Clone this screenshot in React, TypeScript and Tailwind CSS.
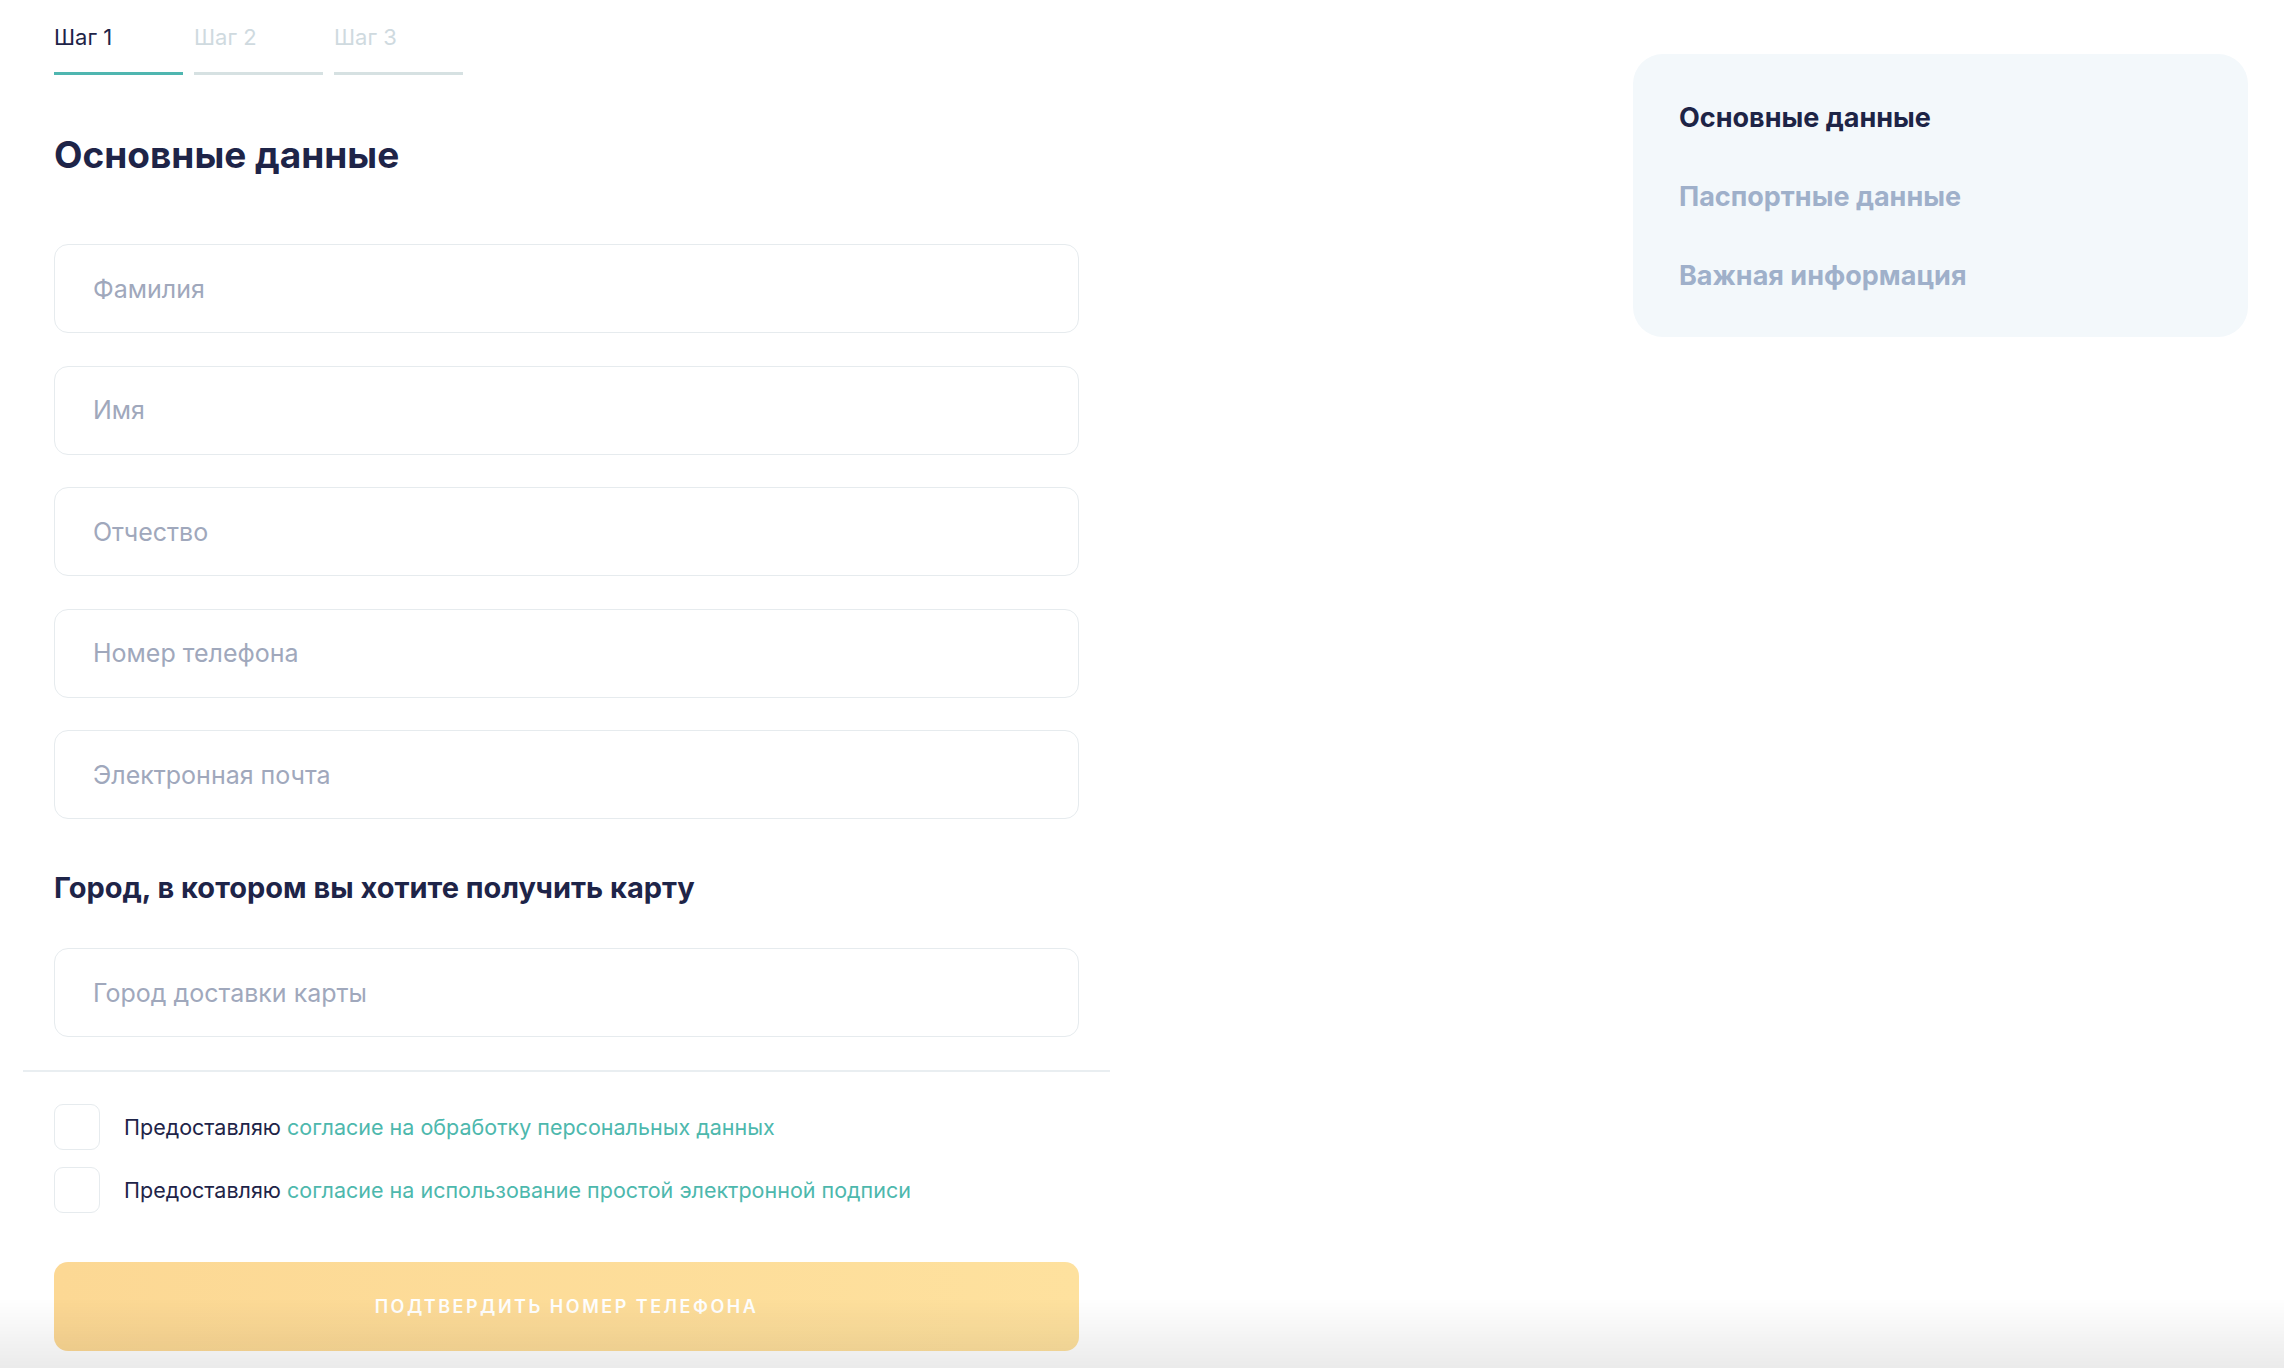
import React from 'react';

const font = { fontFamily: '"Inter", "Noto Sans", sans-serif' };

const fields = ['Фамилия', 'Имя', 'Отчество', 'Номер телефона', 'Электронная почта'];

const Field: React.FC<{ placeholder: string }> = ({ placeholder }) => (
  <input
    placeholder={placeholder}
    className="h-[89px] w-full rounded-[14px] border border-[#e6ebee] bg-white pl-[38px] text-[25px] text-[#1e2448] placeholder:text-[#a0a8bc] outline-none"
  />
);

const Consent: React.FC<{ link: string }> = ({ link }) => (
  <label className="flex items-center gap-[24px]">
    <span className="h-[46px] w-[46px] shrink-0 rounded-[9px] border border-[#e6ebee] bg-white" />
    <span className="text-[21.5px] text-[#1e2448]">
      Предоставляю <span className="text-[#4db8ad]">{link}</span>
    </span>
  </label>
);

export default function App() {
  const steps = ['Шаг 1', 'Шаг 2', 'Шаг 3'];
  const menu = ['Основные данные', 'Паспортные данные', 'Важная информация'];

  return (
    <div className="relative min-h-screen bg-white" style={font}>
      <div className="flex justify-between pl-[23px] pr-[36px]">
        <main className="w-[1087px]">
          <div className="px-[31px]">
            <nav className="flex gap-[11px] pt-[22px]">
              {steps.map((s, i) => (
                <div key={s} className="w-[129px]">
                  <div className={`text-[22px] leading-[30px] ${i === 0 ? 'text-[#1e2448]' : 'text-[#cfdadf]'}`}>{s}</div>
                  <div className={`mt-[20px] h-[3px] ${i === 0 ? 'bg-[#4fb6b0]' : 'bg-[#d6e1e2]'}`} />
                </div>
              ))}
            </nav>

            <h1 className="mt-[58px] text-[37px] font-bold leading-[44px] text-[#1e2448]">Основные данные</h1>

            <div className="mt-[67px] flex flex-col gap-[32.5px]">
              {fields.map((f) => (
                <Field key={f} placeholder={f} />
              ))}
            </div>

            <h2 className="mt-[51px] text-[29px] font-bold leading-[36px] text-[#1e2448]">
              Город, в котором вы хотите получить карту
            </h2>

            <div className="mt-[42px]">
              <Field placeholder="Город доставки карты" />
            </div>
          </div>

          <div className="mt-[33px] h-[2px] bg-[#e9eef1]" />

          <div className="px-[31px]">
            <div className="mt-[32px] flex flex-col gap-[17px]">
              <Consent link="согласие на обработку персональных данных" />
              <Consent link="согласие на использование простой электронной подписи" />
            </div>

            <button className="mt-[49px] h-[89px] w-full rounded-[14px] bg-linear-to-r from-[#fcd894] to-[#fee19e] text-[18px] font-semibold uppercase tracking-[2.5px] text-white">
              Подтвердить номер телефона
            </button>
          </div>
        </main>

        <aside className="mt-[54px] h-[283px] w-[615px] rounded-[30px] bg-[#f3f8fb] px-[46px] pt-[47px]">
          <ul className="flex flex-col gap-[45px]">
            {menu.map((m, i) => (
              <li
                key={m}
                className={`text-[27px] font-bold leading-[34px] ${i === 0 ? 'text-[#1d2446]' : 'text-[#9fb0ca]'}`}
              >
                {m}
              </li>
            ))}
          </ul>
        </aside>
      </div>

      <div className="pointer-events-none fixed inset-x-0 bottom-0 h-[70px] bg-linear-to-b from-black/0 to-black/[0.08]" />
    </div>
  );
}
